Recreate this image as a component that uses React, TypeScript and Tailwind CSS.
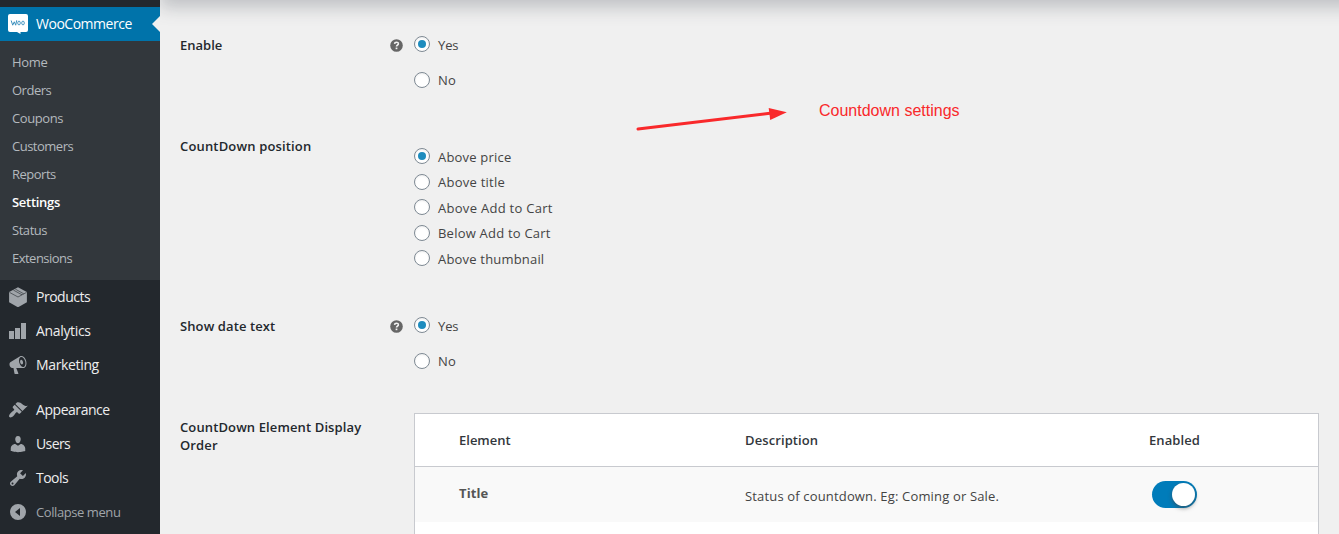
import React from 'react';

const SEGOE = "font-['Open_Sans','Noto_Sans',sans-serif]";

const subItems = [
  { label: 'Home', cls: 'tracking-[-0.35px]' },
  { label: 'Orders', cls: 'tracking-[-0.5px]' },
  { label: 'Coupons', cls: 'tracking-[-0.4px]' },
  { label: 'Customers', cls: 'tracking-[-0.5px]' },
  { label: 'Reports', cls: 'tracking-[-0.5px]' },
  { label: 'Settings', cls: 'font-semibold text-white tracking-[-0.3px]' },
  { label: 'Status', cls: 'tracking-[-0.45px]' },
  { label: 'Extensions', cls: 'tracking-[-0.52px]' },
];

function Icon({ children }: { children: React.ReactNode }) {
  return (
    <svg viewBox="0 0 20 20" className="h-5 w-5 shrink-0" fill="#a0a5aa" fillRule="evenodd">
      {children}
    </svg>
  );
}

const icons = {
  products: (
    <Icon>
      <path d="M10 0.2L18.9 5V15.3L10 20.3L1.1 15.3V5z" />
      <path d="M1.5 5.4L10 10L18.5 5.4M5.4 3.1L14 7.8M7.3 2.1L15.7 6.8" fill="none" stroke="#23282d" strokeWidth="0.6" />
    </Icon>
  ),
  analytics: (
    <Icon>
      <path d="M13 2h5v16h-5zM7 7h5v11H7zM1 10h5v8H1z" />
    </Icon>
  ),
  marketing: (
    <Icon>
      <path d="M18.15 5.94c.46 1.62.38 3.22-.02 4.48-.42 1.28-1.26 2.18-2.3 2.48-.16.06-.26.06-.4.06-.06.02-.12.02-.18.02-.06.02-.14.02-.22.02h-6.8l2.22 5.5c.02.14-.06.26-.14.34-.08.1-.24.16-.34.16H6.95c-.1 0-.26-.06-.34-.16-.08-.08-.16-.2-.14-.34l-1-5.5H4.25l-.02-.02c-.5.06-1.08-.18-1.54-.62s-.88-1.08-1.06-1.88c-.24-.8-.2-1.56-.02-2.2.18-.62.58-1.08 1.06-1.3l.02-.02 9-5.4c.1-.06.18-.1.24-.16.06-.04.14-.08.24-.12.16-.08.28-.12.5-.18 1.04-.3 2.24.1 3.22.98s1.84 2.24 2.26 3.86zm-2.58 5.98h-.02c.4-.1.74-.34 1.04-.7.58-.7.86-1.76.86-3.04 0-.64-.1-1.3-.28-1.98-.34-1.36-1.02-2.5-1.78-3.24s-1.68-1.1-2.46-.88c-.82.22-1.4.96-1.7 2-.32 1.04-.28 2.36.06 3.72.38 1.36 1 2.5 1.8 3.24.78.74 1.62 1.1 2.48.88zm-2.54-7.08c.22-.04.42-.02.62.04.38.16.76.48 1.02 1s.42 1.2.42 1.78c0 .3-.04.56-.12.8-.18.48-.44.84-.86.94-.34.1-.8-.06-1.14-.4s-.64-.86-.78-1.5c-.18-.62-.12-1.24.02-1.72s.48-.84.82-.94z" />
    </Icon>
  ),
  appearance: (
    <Icon>
      <path d="M14.48 11.06L7.41 3.99l1.5-1.5c.5-.56 2.3-.47 3.51.32 1.21.8 1.43 1.28 2.91 2.1 1.18.64 2.45 1.26 4.45.85zm-.71.71L6.7 4.7 4.93 6.47c-.39.39-.39 1.02 0 1.41l1.06 1.06c.39.39.39 1.03 0 1.42-.6.6-1.43 1.11-2.21 1.69-.35.26-.7.53-1.01.84C1.43 14.23.4 16.08 1.4 17.07c.99 1 2.84-.03 4.18-1.36.31-.31.58-.66.85-1.02.57-.78 1.08-1.61 1.69-2.21.39-.39 1.02-.39 1.41 0l1.06 1.06c.39.39 1.02.39 1.41 0z" />
    </Icon>
  ),
  users: (
    <Icon>
      <path d="M10 9.25c-2.27 0-2.73-3.44-2.73-3.44C7 4.02 7.82 2 9.97 2c2.16 0 2.98 2.02 2.71 3.81 0 0-.41 3.44-2.68 3.44zm0 2.57L12.72 10c2.39 0 4.52 2.33 4.52 4.53v2.49s-3.65 1.13-7.24 1.13c-3.65 0-7.24-1.13-7.24-1.13v-2.49c0-2.25 1.94-4.48 4.47-4.48z" />
    </Icon>
  ),
  tools: (
    <Icon>
      <path d="M16.68 9.77c-1.34 1.34-3.3 1.67-4.95.99l-5.41 6.52c-.99.99-2.59.99-3.58 0s-.99-2.59 0-3.57l6.52-5.42c-.68-1.65-.35-3.61.99-4.95 1.28-1.28 3.12-1.62 4.72-1.06l-2.89 2.89 2.82 2.82 2.86-2.87c.53 1.58.18 3.39-1.08 4.65zM3.81 16.21c.4.39 1.04.39 1.43 0 .4-.4.4-1.04 0-1.43-.39-.4-1.03-.4-1.43 0-.39.39-.39 1.03 0 1.43z" />
    </Icon>
  ),
  collapse: (
    <Icon>
      <path d="M10 2a8 8 0 1 0 0 16a8 8 0 1 0 0-16zM12 6v8l-5-4z" />
    </Icon>
  ),
};

function MenuItem({ icon, label, cls }: { icon: React.ReactNode; label: string; cls: string }) {
  return (
    <div className="flex h-[34px] items-center gap-2 pl-2">
      {icon}
      <span className={`whitespace-nowrap ${cls}`}>{label}</span>
    </div>
  );
}

function Sidebar() {
  return (
    <nav className="relative z-10 flex h-full w-[160px] shrink-0 flex-col bg-[#23282d] pt-[7px] text-[14px] leading-[18px] text-[#eee]">
      <div className="relative flex h-[34px] items-center gap-2 bg-[#0073aa] pl-2 text-white">
        <svg viewBox="0 0 20 20" className="h-5 w-5 shrink-0">
          <path d="M2 0h16a2 2 0 0 1 2 2v14a2 2 0 0 1-2 2h-5.500v2L9 18H2a2 2 0 0 1-2-2V2a2 2 0 0 1 2-2z" fill="#fff" />
          <path d="M3.200 6.500L4.700 11.200L6.300 7.800L7.700 11.200L8.700 6.300" fill="none" stroke="#3a8fbd" strokeWidth="1" />
          <ellipse cx="11" cy="9" rx="1.300" ry="1.900" fill="none" stroke="#3a8fbd" strokeWidth="0.900" />
          <ellipse cx="15" cy="9" rx="1.300" ry="1.900" fill="none" stroke="#3a8fbd" strokeWidth="0.900" />
        </svg>
        <span className="whitespace-nowrap tracking-[-0.48px]">WooCommerce</span>
        <svg viewBox="0 0 8 16" className="absolute top-[9px] right-0 h-4 w-2">
          <path d="M8 0V16L0 8z" fill="#f0f0f0" />
        </svg>
      </div>
      <div className="flex h-[239px] flex-col bg-[#32373c] pt-[7px] pl-3 text-[13px] text-[#b4b9be]">
        {subItems.map((item) => (
          <span key={item.label} className={`flex h-7 items-center whitespace-nowrap ${item.cls}`}>
            {item.label}
          </span>
        ))}
      </div>
      <MenuItem icon={icons.products} label="Products" cls="tracking-[-0.5px]" />
      <MenuItem icon={icons.analytics} label="Analytics" cls="tracking-[-0.33px]" />
      <MenuItem icon={icons.marketing} label="Marketing" cls="tracking-[-0.35px]" />
      <div className="h-[11px]" />
      <MenuItem icon={icons.appearance} label="Appearance" cls="tracking-[-0.45px]" />
      <MenuItem icon={icons.users} label="Users" cls="tracking-[-0.6px]" />
      <MenuItem icon={icons.tools} label="Tools" cls="tracking-[-0.55px]" />
      <MenuItem icon={icons.collapse} label="Collapse menu" cls="text-[13px] text-[#a0a5aa] tracking-[-0.42px]" />
    </nav>
  );
}

function Radio({ label, checked, row, cls }: { label: string; checked?: boolean; row: string; cls: string }) {
  return (
    <label className={`flex items-center gap-2 text-[#444] ${row}`}>
      <span className="mb-px flex h-4 w-4 shrink-0 items-center justify-center rounded-full border border-[#7e8993] bg-white shadow-[inset_0_1px_2px_rgba(0,0,0,0.07)]">
        {checked && <span className="h-2 w-2 rounded-full bg-[#1e8cbe]" />}
      </span>
      <span className={`whitespace-nowrap ${cls}`}>{label}</span>
    </label>
  );
}

function HelpTip() {
  return (
    <svg viewBox="0 0 12 12" className="ml-auto mr-[11px] mt-[3px] h-[13px] w-[13px] shrink-0">
      <circle cx="6" cy="6" r="5.800" fill="#666" />
      <path d="M4.200 4.500C4.300 2.500 7.800 2.600 7.700 4.500C7.600 5.700 6 5.600 6 7" fill="none" stroke="#f3f3f3" strokeWidth="1.500" />
      <rect x="5.200" y="7.900" width="1.600" height="1.500" fill="#f3f3f3" />
    </svg>
  );
}

function Row({ label, cls, help, className, children }: { label: string; cls: string; help?: boolean; className: string; children: React.ReactNode }) {
  return (
    <section className={`flex ${className}`}>
      <div className="flex w-[234px] shrink-0 items-start">
        <h3 className={`max-w-[200px] font-semibold leading-[18px] text-[#23282d] ${cls}`}>{label}</h3>
        {help && <HelpTip />}
      </div>
      {children}
    </section>
  );
}

function YesNo() {
  return (
    <div className="flex flex-col">
      <Radio label="Yes" checked row="h-[18px] [&>span:first-child]:mb-[3px]" cls="tracking-[-0.1px]" />
      <Radio label="No" row="mt-[17px] h-[18px]" cls="tracking-[0.3px]" />
    </div>
  );
}

export default function App() {
  return (
    <div className={`flex h-[534px] w-[1339px] overflow-hidden bg-[#f0f0f0] text-[13px] leading-[18px] ${SEGOE}`}>
      <Sidebar />
      <main className="relative flex-1 overflow-hidden pl-5">
        <div className="absolute -top-[60px] -right-10 left-0 h-[60px] shadow-[0_8px_16px_0_rgba(85,93,102,0.3)]" />
        <Row label="Enable" cls="" help className="h-[137px] pt-9">
          <YesNo />
        </Row>
        <Row label="CountDown position" cls="tracking-[0.16px]" className="h-[180px]">
          <div className="flex flex-col pt-[7px]">
            <Radio label="Above price" checked row="h-[25px]" cls="tracking-[0.2px]" />
            <Radio label="Above title" row="h-[26px]" cls="tracking-[0.25px]" />
            <Radio label="Above Add to Cart" row="h-[25px]" cls="tracking-[0.29px]" />
            <Radio label="Below Add to Cart" row="h-[26px]" cls="tracking-[0.22px]" />
            <Radio label="Above thumbnail" row="h-[25px]" cls="tracking-[0.19px]" />
          </div>
        </Row>
        <Row label="Show date text" cls="tracking-[0.1px]" help className="h-24">
          <YesNo />
        </Row>
        <Row label="CountDown Element Display Order" cls="pt-[5px] tracking-[0.12px]" className="h-[140px]">
          <div className="h-[140px] w-[905px] border border-[#c8cacf] bg-white">
            <div className="flex h-[53px] items-center border-b border-[#c8cacf] pl-11 font-semibold text-[#32373c]">
              <span className="w-[286px]">Element</span>
              <span className="w-[404px] tracking-[0.1px]">Description</span>
              <span className="tracking-[0.1px]">Enabled</span>
            </div>
            <div className="flex h-[55px] items-center bg-[#f9f9f9] pl-11 text-[#444]">
              <span className="mb-[3px] w-[286px] font-bold tracking-[0.1px] text-[#555]">Title</span>
              <span className="mt-[3px] w-[407px] whitespace-nowrap tracking-[0.16px]">Status of countdown. Eg: Coming or Sale.</span>
              <span className="flex h-[27px] w-[45px] items-center justify-end rounded-full bg-[#007cba] pr-0.5">
                <span className="h-[23px] w-[23px] rounded-full bg-white shadow-[0_2px_4px_rgba(68,68,68,0.6)]" />
              </span>
            </div>
          </div>
        </Row>
        <svg viewBox="0 0 160 30" className="absolute top-[103px] left-[472px] h-[30px] w-[160px]">
          <path d="M6 26L138 10.300" stroke="#f9292b" strokeWidth="3" strokeLinecap="round" />
          <path d="M154.800 9.300L136.700 5L138.200 17z" fill="#f9292b" />
        </svg>
        <span className="absolute top-[101px] left-[659px] whitespace-nowrap font-['Liberation_Sans',Arial,sans-serif] text-[16px] leading-5 text-[#f9292b]">
          Countdown settings
        </span>
      </main>
    </div>
  );
}
